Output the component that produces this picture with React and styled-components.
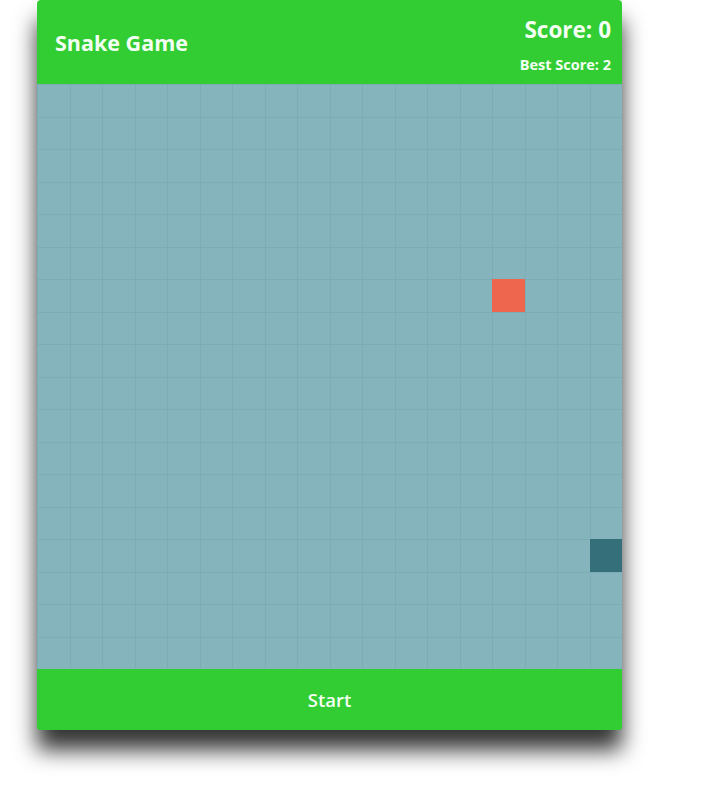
import React from 'react'
import styled, { createGlobalStyle } from 'styled-components'

const SIZE = 18
const CELL = 32.5
const food = { x: 14, y: 6 }
const snake = [{ x: 17, y: 14 }]

const GlobalStyle = createGlobalStyle`
    html, body {
        margin: 0;
        padding: 0;
        background: #ffffff;
        font-family: "Open Sans", "Noto Sans", sans-serif;
    }
    body {
        min-height: 100vh;
    }
`;

const App = () => {
    const cells = []
    for (let y = 0; y < SIZE; y++) {
        for (let x = 0; x < SIZE; x++) {
            let kind = 'empty'
            if (food.x === x && food.y === y) kind = 'food'
            if (snake.some(s => s.x === x && s.y === y)) kind = 'snake'
            cells.push(<Cell key={`${x}-${y}`} kind={kind} />)
        }
    }
    return (
        <>
            <GlobalStyle />
            <Page>
                <Board>
                    <Header>
                        <Title>Snake Game</Title>
                        <Scores>
                            <Score>Score: 0</Score>
                            <Best>Best Score: 2</Best>
                        </Scores>
                    </Header>
                    <Grid>{cells}</Grid>
                    <StartButton>Start</StartButton>
                </Board>
            </Page>
        </>
    )
}

const Page = styled.div`
    padding: 0 0 55px 37px;
`;

const Board = styled.div`
    width: ${SIZE * CELL}px;
    border-radius: 4px;
    overflow: hidden;
    background: #32cd32;
    box-shadow: 0 20px 22px rgba(0, 0, 0, 0.8);
    display: flex;
    flex-direction: column;
`;

const Header = styled.div`
    height: 84px;
    display: flex;
    align-items: center;
    justify-content: space-between;
    padding: 0 11px 0 18px;
    box-sizing: border-box;
    color: #f4fff4;
`;

const Title = styled.h1`
    margin: 0;
    font-size: 21.5px;
    font-weight: 700;
`;

const Scores = styled.div`
    display: flex;
    flex-direction: column;
    align-items: flex-end;
    gap: 13px;
    margin-top: 6px;
`;

const Score = styled.div`
    font-size: 22.5px;
    font-weight: 700;
    line-height: 1.2;
`;

const Best = styled.div`
    font-size: 14.5px;
    font-weight: 700;
    line-height: 1.2;
`;

const Grid = styled.div`
    display: grid;
    grid-template-columns: repeat(${SIZE}, ${CELL}px);
    grid-template-rows: repeat(${SIZE}, ${CELL}px);
    background: #85b4bc;
`;

const Cell = styled.div`
    box-shadow: ${p => p.kind === 'empty' ? 'inset 1px 1px 0 rgba(100, 160, 170, 0.3)' : 'none'};
    background: ${p => p.kind === 'food' ? '#ef664f' : p.kind === 'snake' ? '#346f7a' : 'transparent'};
`;

const StartButton = styled.button`
    height: 61px;
    border: none;
    background: #32cd32;
    color: #f4fff4;
    font-family: "Open Sans", "Noto Sans", sans-serif;
    font-size: 18.5px;
    font-weight: 600;
    cursor: pointer;
`;

export default App
